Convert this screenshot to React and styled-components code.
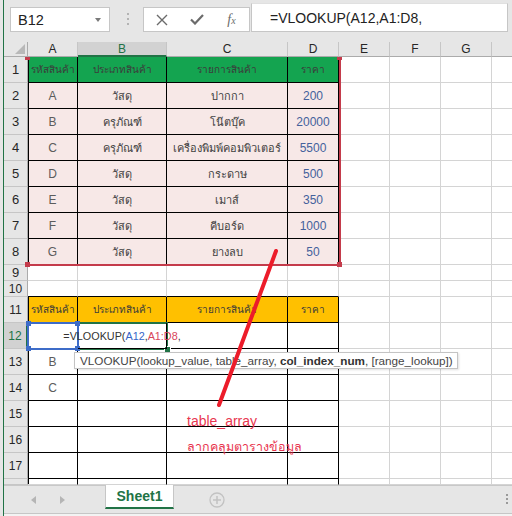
import React from "react"
import styled, { createGlobalStyle, css } from "styled-components"

const GlobalStyle = createGlobalStyle`
  html, body {
    margin: 0;
    padding: 0;
    background: #e6e6e6;
  }
  body {
    font-family: "Liberation Sans", "Noto Sans", sans-serif;
  }
`

const GREEN = "#217346"
const GRID = "#d4d4d4"

// every grid child sits on an explicit track so the overlays can't push cells around
const at = css`
  grid-row: ${p => p.$gr};
  grid-column: ${p => p.$gc};
`

const Window = styled.div`
  width: 512px;
  height: 516px;
  overflow: hidden;
  background: #e6e6e6;
  padding-left: 3px;
  box-sizing: border-box;
`

const Frame = styled.div`
  height: 100%;
  border-left: 1px solid ${GREEN};
  display: flex;
  flex-direction: column;
`

/* ---------- formula bar ---------- */

const FormulaBar = styled.div`
  height: 42px;
  flex: none;
  display: flex;
  align-items: flex-start;
  padding-left: 6px;
`

const NameBox = styled.div`
  margin-top: 7px;
  width: 100px;
  height: 25px;
  box-sizing: border-box;
  background: #fff;
  border: 1px solid #c6c6c6;
  display: flex;
  align-items: center;
  justify-content: space-between;
  padding: 0 8px 0 7px;
  font-size: 14.5px;
  color: #222;
`

const Caret = styled.span`
  width: 0;
  height: 0;
  border-top: 4px solid #7a7a7a;
  border-left: 3.5px solid transparent;
  border-right: 3.5px solid transparent;
`

const Grip = styled.div`
  margin: 13px 0 0 17px;
  display: flex;
  flex-direction: column;
  gap: 3px;
  span {
    width: 2px;
    height: 2px;
    background: #b3b3b3;
  }
`

const FxBox = styled.div`
  margin: 7px 0 0 14px;
  width: 107px;
  height: 25px;
  box-sizing: border-box;
  background: #fff;
  border: 1px solid #c6c6c6;
  display: grid;
  grid-template-columns: repeat(3, 35px);
  align-items: center;
  justify-items: center;
`

const Fx = styled.span`
  font-family: "Liberation Serif", serif;
  font-style: italic;
  font-size: 14px;
  color: #6b6b6b;
  sub {
    font-size: 10px;
    vertical-align: 0;
  }
`

const FormulaInput = styled.div`
  margin: 3px 4px 0 1px;
  flex: 1;
  height: 29px;
  box-sizing: border-box;
  background: #fff;
  border: 1px solid #c6c6c6;
  border-top-color: #e0e0e0;
  padding-left: 18px;
  display: flex;
  align-items: center;
  font-size: 14px;
  color: #222;
`

/* ---------- sheet grid ---------- */

const COLS = ["A", "B", "C", "D", "E", "F", "G", "H"]
const COL_WIDTHS = [50, 89, 121, 51, 51, 51, 51, 51]
const ROW_HEIGHTS = [26, 26, 26, 26, 26, 26, 26, 26, 16, 16, 26, 26, 26, 26, 26, 26, 26, 6]

const Sheet = styled.div`
  flex: none;
  height: 443px;
  overflow: hidden;
  background: #fff;
  display: grid;
  grid-template-columns: 24px ${COL_WIDTHS.map(w => w + "px").join(" ")};
  grid-template-rows: 15px ${ROW_HEIGHTS.map(h => h + "px").join(" ")};
`

const Corner = styled.div`
  grid-row: 1;
  grid-column: 1;
  background: #e6e6e6;
  border-right: 1px solid #ababab;
  border-bottom: 1px solid #ababab;
  box-sizing: border-box;
  display: flex;
  align-items: flex-end;
  justify-content: flex-end;
  padding: 0 2px 2px 0;
  &::after {
    content: "";
    width: 0;
    height: 0;
    border-left: 10px solid transparent;
    border-bottom: 10px solid #b8b8b8;
  }
`

const ColHead = styled.div`
  ${at}
  background: ${p => (p.$active ? "#d2d2d2" : "#e6e6e6")};
  color: ${p => (p.$active ? GREEN : "#262626")};
  border-right: 1px solid #c6c6c6;
  border-bottom: ${p => (p.$active ? `2px solid ${GREEN}` : "1px solid #ababab")};
  box-sizing: border-box;
  display: flex;
  align-items: center;
  justify-content: center;
  font-size: 12px;
`

const RowHead = styled.div`
  ${at}
  background: ${p => (p.$active ? "#d2d2d2" : "#e6e6e6")};
  color: ${p => (p.$active ? GREEN : "#262626")};
  border-right: ${p => (p.$active ? `2px solid ${GREEN}` : "1px solid #ababab")};
  border-bottom: 1px solid #c6c6c6;
  box-sizing: border-box;
  display: flex;
  align-items: center;
  justify-content: center;
  font-size: ${p => (p.$small ? "12px" : "13px")};
`

const Cell = styled.div`
  ${at}
  display: flex;
  align-items: center;
  justify-content: center;
  white-space: nowrap;
  font-size: ${p => p.$size || "12px"};
  color: ${p => p.$ink || "#3b3b3b"};
  background: ${p => p.$fill || "transparent"};
  border-right: 1px solid ${p => (p.$right ? "#000" : GRID)};
  border-bottom: 1px solid ${p => (p.$bottom ? "#000" : GRID)};
  box-shadow: ${p => (p.$left ? "inset 1px 0 0 #000" : "none")};
  box-sizing: border-box;
`

// the cell being edited: its text runs over the neighbours and the selection marks
const EditCell = styled(Cell)`
  position: relative;
  z-index: 2;
  font-size: 10.8px;
  color: #333;
`

const Ref = styled.span`
  color: ${p => p.$c};
`

/* ---------- marks drawn over the grid ---------- */

const Handle = styled.i`
  position: absolute;
  width: 5px;
  height: ${p => (p.$top && p.$flush ? "3px" : "5px")};
  background: ${p => p.$c};
  ${p => p.$top && `top: ${p.$flush ? "0" : "-3px"};`}
  ${p => p.$bottom && "bottom: -3px;"}
  ${p => p.$left && "left: -3px;"}
  ${p => p.$right && "right: -3px;"}
`

const RangeMark = styled.div`
  grid-row: 2 / 10;
  grid-column: 2 / 6;
  position: relative;
  z-index: 1;
  margin: 0 -2px -1px 0;
  border-right: 2px solid #c43b4b;
  border-bottom: 2px solid #c43b4b;
  pointer-events: none;
`

const CellMark = styled.div`
  ${at}
  position: relative;
  z-index: 1;
  margin: -1px;
  border: 2px solid ${p => p.$c};
  pointer-events: none;
`

const FillHandle = styled.i`
  position: absolute;
  right: -5px;
  bottom: -5px;
  width: 5px;
  height: 5px;
  background: ${GREEN};
  border: 1px solid #fff;
`

const Tip = styled.div`
  grid-row: 14;
  grid-column: 3 / 10;
  align-self: start;
  justify-self: start;
  margin: 3px 0 0 -4px;
  position: relative;
  z-index: 2;
  height: 17px;
  box-sizing: border-box;
  background: #fff;
  border: 1px solid #c4c4c4;
  box-shadow: 1px 1px 2px rgba(0, 0, 0, 0.12);
  padding: 0 4px 0 5px;
  font-size: 11.7px;
  line-height: 15px;
  color: #454545;
  white-space: nowrap;
  b {
    color: #333;
  }
`

const Note = styled.div`
  grid-row: 16 / 18;
  grid-column: 4 / 7;
  position: relative;
  z-index: 2;
  padding: 7px 0 0 20px;
  display: flex;
  flex-direction: column;
  font-size: 14px;
  line-height: 26px;
  color: #e8364f;
  white-space: nowrap;
`

const NoteThai = styled.span`
  font-size: 12.5px;
`

const Stroke = styled.svg`
  grid-row: 9 / 17;
  grid-column: 4 / 5;
  position: relative;
  z-index: 3;
  overflow: visible;
  pointer-events: none;
`

/* ---------- sheet tabs ---------- */

const TabBar = styled.div`
  flex: none;
  height: 28px;
  box-sizing: border-box;
  border-top: 1px solid #c8c8c8;
  display: flex;
  align-items: flex-start;
`

const Nav = styled.div`
  width: 101px;
  height: 100%;
  box-sizing: border-box;
  padding-left: 27px;
  display: flex;
  align-items: center;
  gap: 24px;
`

const Arrow = styled.span`
  width: 0;
  height: 0;
  border-top: 4px solid transparent;
  border-bottom: 4px solid transparent;
  ${p =>
    p.$dir === "left"
      ? "border-right: 5px solid #b5b5b5;"
      : "border-left: 5px solid #b5b5b5;"}
`

const Tab = styled.div`
  width: 69px;
  height: 24px;
  box-sizing: border-box;
  margin-top: -1px;
  background: #fff;
  border-left: 1px solid #c6c6c6;
  border-right: 1px solid #c6c6c6;
  border-bottom: 2px solid ${GREEN};
  display: flex;
  align-items: center;
  justify-content: center;
  font-size: 14px;
  font-weight: bold;
  color: ${GREEN};
`

const AddSheet = styled.svg`
  margin: 6px 0 0 35px;
`

const Dots = styled.div`
  margin: 8px 4px 0 auto;
  display: flex;
  flex-direction: column;
  gap: 2px;
  span {
    width: 2px;
    height: 2px;
    background: #9a9a9a;
  }
`

const Strip = styled.div`
  flex: 1;
  background: #f3f3f3;
  border-top: 1px solid #c6c6c6;
`

/* ---------- data ---------- */

const HEAD = ["รหัสสินค้า", "ประเภทสินค้า", "รายการสินค้า", "ราคา"]
const ITEMS = [
  ["A", "วัสดุ", "ปากกา", "200"],
  ["B", "ครุภัณฑ์", "โน๊ตบุ๊ค", "20000"],
  ["C", "ครุภัณฑ์", "เครื่องพิมพ์คอมพิวเตอร์", "5500"],
  ["D", "วัสดุ", "กระดาษ", "500"],
  ["E", "วัสดุ", "เมาส์", "350"],
  ["F", "วัสดุ", "คีบอร์ด", "1000"],
  ["G", "วัสดุ", "ยางลบ", "50"],
]
const INKS = ["#5c5c5c", "#404040", "#404040", "#44619c"]
const THAI = /[\u0E00-\u0E7F]/

const cellProps = (r, c) => {
  const upper = r >= 1 && r <= 8 && c <= 3
  const lower = r >= 11 && c <= 3
  const props = {}
  if (upper || lower) {
    props.$right = true
    props.$bottom = r !== 18
    props.$left = c === 0
  }
  if (r === 10 && c <= 3) props.$bottom = true

  if (r === 1 && c <= 3) props.$fill = "#14a450"
  if (r >= 2 && r <= 8 && c <= 3) props.$fill = "#f7e8e7"
  if (r === 11 && c <= 3) props.$fill = "#ffc000"
  if (r !== 1 && r !== 11) props.$ink = INKS[c]
  return props
}

const cellText = (r, c) => {
  if (r === 1 || r === 11) return HEAD[c] || ""
  if (r >= 2 && r <= 8) return ITEMS[r - 2][c] || ""
  if (r === 13 && c === 0) return "B"
  if (r === 14 && c === 0) return "C"
  return ""
}

const textSize = (r, text) => {
  if (!THAI.test(text)) return "12px"
  return r === 1 || r === 11 ? "10px" : "11px"
}

const App = () => {
  const rows = ROW_HEIGHTS.map((_, i) => i + 1)

  return (
    <Window>
      <GlobalStyle />
      <Frame>
        <FormulaBar>
          <NameBox>
            <span>B12</span>
            <Caret />
          </NameBox>
          <Grip>
            <span />
            <span />
            <span />
          </Grip>
          <FxBox>
            <svg width="12" height="12" viewBox="0 0 12 12">
              <path d="M1 1 L11 11 M11 1 L1 11" stroke="#6b6b6b" strokeWidth="1.4" />
            </svg>
            <svg width="14" height="11" viewBox="0 0 14 11">
              <path d="M1 5.5 L5 9.5 L13 1" stroke="#6b6b6b" strokeWidth="2.2" fill="none" />
            </svg>
            <Fx>
              f<sub>x</sub>
            </Fx>
          </FxBox>
          <FormulaInput>=VLOOKUP(A12,A1:D8,</FormulaInput>
        </FormulaBar>

        <Sheet>
          <Corner />
          {COLS.map((col, c) => (
            <ColHead key={col} $gr={1} $gc={c + 2} $active={col === "B"}>
              {col}
            </ColHead>
          ))}

          {rows.map(r => (
            <React.Fragment key={r}>
              <RowHead $gr={r + 1} $gc={1} $active={r === 12} $small={r >= 10}>
                {r < 18 ? r : ""}
              </RowHead>
              {COLS.map((col, c) => {
                const props = cellProps(r, c)
                if (r === 12 && c === 1) {
                  return (
                    <EditCell key={col + r} $gr={r + 1} $gc={c + 2} {...props}>
                      =VLOOKUP(<Ref $c="#3565c8">A12</Ref>,<Ref $c="#d8455a">A1:D8</Ref>,
                    </EditCell>
                  )
                }
                const text = cellText(r, c)
                return (
                  <Cell key={col + r} $gr={r + 1} $gc={c + 2} $size={textSize(r, text)} {...props}>
                    {text}
                  </Cell>
                )
              })}
            </React.Fragment>
          ))}

          <RangeMark>
            <Handle $c="#c43b4b" $left $top $flush />
            <Handle $c="#c43b4b" $right $top $flush />
            <Handle $c="#c43b4b" $left $bottom />
            <Handle $c="#c43b4b" $right $bottom />
          </RangeMark>

          <CellMark $gr={13} $gc={3} $c={GREEN}>
            <FillHandle />
          </CellMark>
          <CellMark $gr={13} $gc={2} $c="#3d6cc8">
            <Handle $c="#3d6cc8" $left $top />
            <Handle $c="#3d6cc8" $right $top />
            <Handle $c="#3d6cc8" $left $bottom />
            <Handle $c="#3d6cc8" $right $bottom />
          </CellMark>

          <Tip>
            VLOOKUP(lookup_value, table_array, <b>col_index_num</b>, [range_lookup])
          </Tip>

          <Note>
            <span>table_array</span>
            <NoteThai>ลากคลุมตารางข้อมูล</NoteThai>
          </Note>

          <Stroke width="121" height="188">
            <line x1="109" y1="12" x2="52" y2="166" stroke="#ec1c2a" strokeWidth="4" strokeLinecap="round" />
          </Stroke>
        </Sheet>

        <TabBar>
          <Nav>
            <Arrow $dir="left" />
            <Arrow $dir="right" />
          </Nav>
          <Tab>Sheet1</Tab>
          <AddSheet width="16" height="16" viewBox="0 0 16 16">
            <circle cx="8" cy="8" r="7" fill="none" stroke="#c2c2c2" strokeWidth="1.3" />
            <path d="M8 4 V12 M4 8 H12" stroke="#c2c2c2" strokeWidth="1.5" />
          </AddSheet>
          <Dots>
            <span />
            <span />
            <span />
          </Dots>
        </TabBar>
        <Strip />
      </Frame>
    </Window>
  )
}

export default App
